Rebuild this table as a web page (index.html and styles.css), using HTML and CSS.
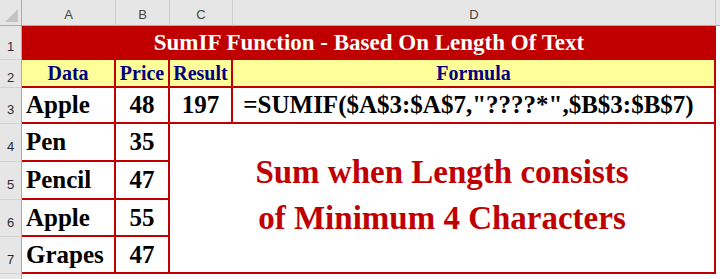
FILE: index.html
```html
<!DOCTYPE html>
<html>
<head>
<meta charset="utf-8">
<link rel="stylesheet" href="styles.css">
</head>
<body>
<div class="sheet">
  <div class="corner"><svg class="tri" width="13" height="13" viewBox="0 0 13 13"><polygon points="13,0 13,13 0,13" fill="#c4c4c4"/></svg></div>
  <div class="ch">A</div>
  <div class="ch">B</div>
  <div class="ch">C</div>
  <div class="ch">D</div>
  <div class="ch blank"></div>

  <div class="rh">1</div>
  <div class="title">SumIF Function - Based On Length Of Text</div>
  <div class="f"></div>

  <div class="rh">2</div>
  <div class="hd">Data</div>
  <div class="hd">Price</div>
  <div class="hd">Result</div>
  <div class="hd">Formula</div>
  <div class="f"></div>

  <div class="rh">3</div>
  <div class="c l">Apple</div>
  <div class="c n">48</div>
  <div class="c n">197</div>
  <div class="c formula">=SUMIF($A$3:$A$7,"????*",$B$3:$B$7)</div>
  <div class="f"></div>

  <div class="rh">4</div>
  <div class="c l">Pen</div>
  <div class="c n">35</div>
  <div class="note">Sum when Length consists<br>of Minimum 4 Characters</div>
  <div class="f"></div>

  <div class="rh">5</div>
  <div class="c l">Pencil</div>
  <div class="c n">47</div>
  <div class="f"></div>

  <div class="rh">6</div>
  <div class="c l">Apple</div>
  <div class="c n">55</div>
  <div class="f"></div>

  <div class="rh">7</div>
  <div class="c l">Grapes</div>
  <div class="c n">47</div>
  <div class="f"></div>

  <div class="rh"></div>
</div>
</body>
</html>
```

FILE: styles.css
```css
* { box-sizing: border-box; }
html, body { margin: 0; padding: 0; background: #ffffff; }
body { width: 720px; height: 279px; overflow: hidden; }

.sheet {
  display: grid;
  grid-template-columns: 22px 94px 54px 63px 483px 4px;
  grid-template-rows: 26px 34px 28px 36px 38px 38px 37px 37px 30px;
  width: 720px;
  height: 279px;
  overflow: hidden;
  font-family: "Liberation Serif", "Times New Roman", serif;
}

.corner {
  background: #e6e6e6;
  border-right: 1px solid #ababab;
  border-bottom: 1px solid #ababab;
  display: flex;
  justify-content: flex-end;
  align-items: flex-end;
  padding: 0 3px 3px 0;
}
.tri { display: block; }

.ch {
  background: #e6e6e6;
  border-right: 1px solid #cdcdcd;
  border-bottom: 1px solid #ababab;
  display: flex;
  justify-content: center;
  align-items: center;
  padding-top: 4px;
  font-family: "Liberation Sans", Arial, sans-serif;
  font-size: 13px;
  color: #444444;
}
.ch.blank { border-right: none; }

.rh {
  background: #e6e6e6;
  border-right: 1px solid #ababab;
  border-bottom: 1px solid #d2d2d2;
  display: flex;
  justify-content: center;
  align-items: center;
  padding-top: 8px;
  font-family: "Liberation Sans", Arial, sans-serif;
  font-size: 13px;
  color: #2a2a3a;
}

.f { background: #ffffff; }

.title {
  grid-column: span 4;
  background: #c00000;
  color: #ffffff;
  font-weight: 700;
  font-size: 23px;
  display: flex;
  justify-content: center;
  align-items: center;
}

.hd {
  background: #ffff99;
  color: #000080;
  font-weight: 700;
  font-size: 20px;
  border-right: 2px solid #c00000;
  border-bottom: 2px solid #c00000;
  display: flex;
  justify-content: center;
  align-items: center;
  padding-top: 1px;
}

.c {
  border-right: 2px solid #c00000;
  border-bottom: 2px solid #c00000;
  display: flex;
  align-items: center;
  font-weight: 700;
  font-size: 25px;
  color: #000000;
  white-space: nowrap;
}
.l { justify-content: flex-start; padding-left: 4px; }
.n { justify-content: center; }
.formula { justify-content: center; padding-right: 10px; }

.note {
  grid-column: span 2;
  grid-row: span 4;
  border-right: 2px solid #c00000;
  border-bottom: 2px solid #c00000;
  display: flex;
  justify-content: center;
  align-items: center;
  text-align: center;
  color: #c00000;
  font-weight: 700;
  font-size: 33px;
  line-height: 46px;
  padding-bottom: 6px;
}
```
